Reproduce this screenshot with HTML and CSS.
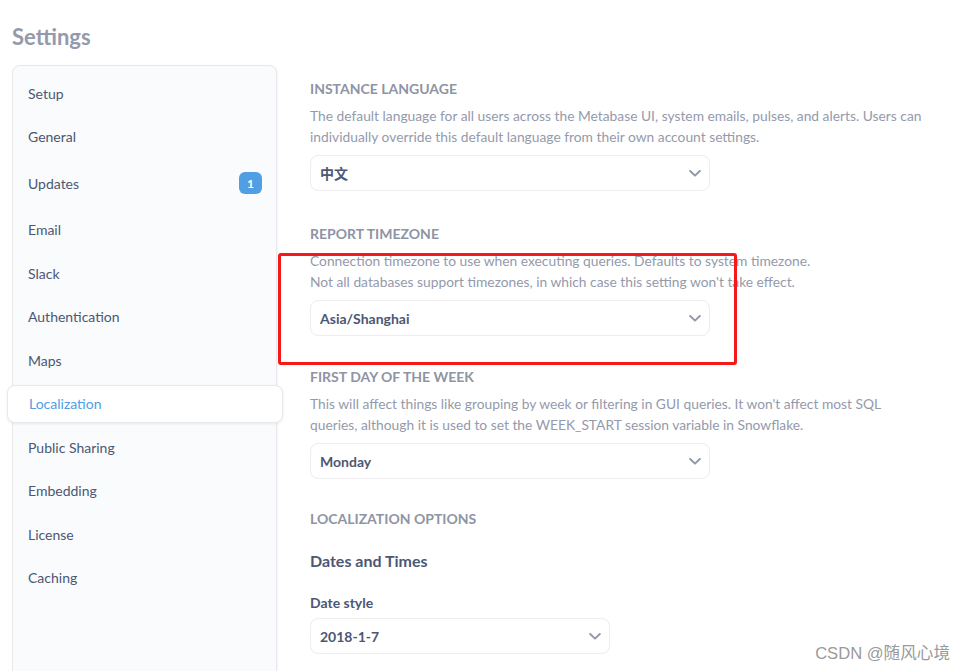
FILE: index.html
```html
<!DOCTYPE html>
<html lang="en">
<head>
<meta charset="utf-8">
<title>Settings</title>
<link rel="stylesheet" href="styles.css">
</head>
<body>
<div class="page">
  <h1 class="title">Settings</h1>
  <div class="layout">
    <nav class="sidebar">
      <div class="nav-item">Setup</div>
      <div class="nav-item">General</div>
      <div class="nav-item nav-badged">Updates <span class="badge">1</span></div>
      <div class="nav-item">Email</div>
      <div class="nav-item">Slack</div>
      <div class="nav-item">Authentication</div>
      <div class="nav-item">Maps</div>
      <div class="nav-item active">Localization</div>
      <div class="nav-item">Public Sharing</div>
      <div class="nav-item">Embedding</div>
      <div class="nav-item">License</div>
      <div class="nav-item">Caching</div>
    </nav>
    <main class="main">
      <section class="setting setting-first">
        <h2 class="setting-title">Instance language</h2>
        <p class="setting-desc">The default language for all users across the Metabase UI, system emails, pulses, and alerts. Users can<br>individually override this default language from their own account settings.</p>
        <div class="select"><span class="select-value cjk">中文</span><svg class="chev" viewBox="0 0 12 7" width="12" height="7"><polyline points="1.2,1 6,5.6 10.8,1"/></svg></div>
      </section>
      <section class="setting setting-mid">
        <h2 class="setting-title">Report timezone</h2>
        <p class="setting-desc">Connection timezone to use when executing queries. Defaults to system timezone.<br>Not all databases support timezones, in which case this setting won't take effect.</p>
        <div class="select"><span class="select-value">Asia/Shanghai</span><svg class="chev" viewBox="0 0 12 7" width="12" height="7"><polyline points="1.2,1 6,5.6 10.8,1"/></svg></div>
        <div class="highlight"></div>
      </section>
      <section class="setting setting-tight">
        <h2 class="setting-title">First day of the week</h2>
        <p class="setting-desc">This will affect things like grouping by week or filtering in GUI queries. It won't affect most SQL<br>queries, although it is used to set the WEEK_START session variable in Snowflake.</p>
        <div class="select"><span class="select-value">Monday</span><svg class="chev" viewBox="0 0 12 7" width="12" height="7"><polyline points="1.2,1 6,5.6 10.8,1"/></svg></div>
      </section>
      <section class="setting">
        <h2 class="setting-title">Localization options</h2>
        <h3 class="group-title">Dates and Times</h3>
        <div class="field-label">Date style</div>
        <div class="select select-small"><span class="select-value">2018-1-7</span><svg class="chev" viewBox="0 0 12 7" width="12" height="7"><polyline points="1.2,1 6,5.6 10.8,1"/></svg></div>
      </section>
    </main>
  </div>
  <div class="watermark">CSDN @随风心境</div>
</div>
</body>
</html>
```
FILE: styles.css
```css
html, body {
  margin: 0;
  padding: 0;
  background: #ffffff;
}
body {
  font-family: Lato, "Noto Sans", sans-serif;
  color: #4c5773;
  overflow: hidden;
}
.page {
  position: relative;
  height: 671px;
  padding-left: 12px;
  box-sizing: border-box;
  overflow: hidden;
}
.title {
  margin: 0;
  padding-top: 24px;
  font-size: 22px;
  line-height: 26px;
  font-weight: 700;
  color: #949aab;
  margin-bottom: 15px;
}
.layout {
  display: flex;
  align-items: flex-start;
  gap: 33px;
}
.sidebar {
  width: 265px;
  min-height: 640px;
  box-sizing: border-box;
  background: #f9fbfc;
  border: 1px solid #e6e8ec;
  border-radius: 8px;
  box-shadow: 1px 0 2px rgba(0,0,0,0.04);
  padding: 8px 0 0 0;
  display: flex;
  flex-direction: column;
  gap: 5.5px;
  flex-shrink: 0;
}
.nav-item {
  display: flex;
  align-items: center;
  justify-content: space-between;
  height: 38px;
  padding: 0 14px 0 15px;
  font-size: 14px;
  color: #4c5773;
}
.nav-badged {
  height: 44px;
}
.badge {
  display: inline-flex;
  align-items: center;
  justify-content: center;
  width: 23px;
  height: 22px;
  border-radius: 6px;
  background: #509ee3;
  color: #fff;
  font-size: 12px;
  font-weight: 700;
}
.nav-item.active {
  margin: 0 -7px 0 -6px;
  padding-left: 21px;
  background: #ffffff;
  border: 1px solid #e6e8ec;
  border-radius: 8px;
  box-shadow: 0 1px 3px rgba(0,0,0,0.08);
  color: #509ee3;
  height: 38px;
  box-sizing: border-box;
}
.main {
  flex: 1;
  padding-top: 14px;
  position: relative;
}
.setting {
  position: relative;
  margin-bottom: 32px;
}
.setting-first {
  margin-bottom: 33px;
}
.setting-mid {
  margin-bottom: 31px;
}
.setting-tight {
  margin-bottom: 30px;
}
.setting-title {
  margin: 0;
  font-size: 14px;
  line-height: 20px;
  font-weight: 700;
  text-transform: uppercase;
  color: #8e94a4;
}
.setting-desc {
  margin: 6px 0 0 0;
  font-size: 13.8px;
  line-height: 21px;
  color: #949aab;
  white-space: nowrap;
}
.select {
  margin-top: 8px;
  width: 400px;
  height: 36px;
  box-sizing: border-box;
  border: 1px solid #eeecec;
  border-radius: 8px;
  background: #fff;
  display: flex;
  align-items: center;
  justify-content: space-between;
  padding: 0 8px 0 9px;
}
.select-small {
  width: 300px;
  margin-top: 5px;
  height: 36px;
}
.select-value {
  font-size: 14px;
  font-weight: 700;
  color: #4c5773;
}
.cjk {
  font-family: Lato, "Noto Sans CJK SC", sans-serif;
}
.chev {
  fill: none;
  stroke: #949aab;
  stroke-width: 2;
  stroke-linecap: round;
  stroke-linejoin: round;
}
.group-title {
  margin: 20px 0 0 0;
  font-size: 16px;
  line-height: 24px;
  font-weight: 700;
  color: #4c5773;
}
.field-label {
  margin-top: 20px;
  font-size: 14px;
  line-height: 20px;
  font-weight: 700;
  color: #4c5773;
}
.highlight {
  position: absolute;
  left: -32px;
  top: 29px;
  width: 459px;
  height: 112px;
  box-sizing: border-box;
  border: 3px solid #f5191a;
  border-radius: 3px;
  pointer-events: none;
}
.watermark {
  position: absolute;
  right: 16px;
  bottom: 7px;
  font-family: "Liberation Sans", "Noto Sans CJK SC", sans-serif;
  font-size: 16.6px;
  color: #9a9a9a;
  text-shadow: 0 0 2px #fff;
}
```
